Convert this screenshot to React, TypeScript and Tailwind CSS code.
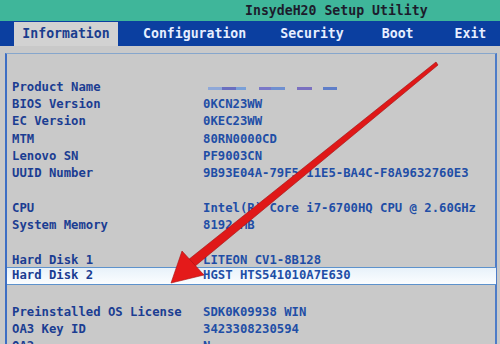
import React from "react";

const mono = { fontFamily: '"DejaVu Sans Mono", "Liberation Mono", monospace' };

type Row = { label: string; value: React.ReactNode } | null;

const Blur = () => (
  <div className="flex items-center h-full pt-[3px] gap-0">
    <div className="w-[14px] h-[3px] bg-[#8fa8d8] ml-[5px]" />
    <div className="w-[14px] h-[3px] bg-[#6a6fc0]" />
    <div className="w-[10px] h-[3px] bg-[#7aa0d8]" />
    <div className="w-[12px] h-[3px] bg-[#7a78c8] ml-[13px]" />
    <div className="w-[14px] h-[3px] bg-[#6f8fd0]" />
    <div className="w-[15px] h-[3px] bg-[#7a70c0] ml-[12px]" />
    <div className="w-[14px] h-[3px] bg-[#5f7ec8] ml-[11px]" />
  </div>
);

const rows: Row[] = [
  { label: "Product Name", value: <Blur /> },
  { label: "BIOS Version", value: "0KCN23WW" },
  { label: "EC Version", value: "0KEC23WW" },
  { label: "MTM", value: "80RN0000CD" },
  { label: "Lenovo SN", value: "PF9003CN" },
  { label: "UUID Number", value: "9B93E04A-79F5-11E5-BA4C-F8A9632760E3" },
  null,
  { label: "CPU", value: "Intel(R) Core i7-6700HQ CPU @ 2.60GHz" },
  { label: "System Memory", value: "8192 MB" },
  null,
  { label: "Hard Disk 1", value: "LITEON CV1-8B128" },
  { label: "Hard Disk 2", value: "HGST HTS541010A7E630" },
  null,
  { label: "Preinstalled OS License", value: "SDK0K09938 WIN" },
  { label: "OA3 Key ID", value: "3423308230594" },
  { label: "OA2", value: "N" },
];

export default function App() {
  return (
    <div
      className="relative w-[500px] h-[344px] overflow-hidden bg-[#c9c9c9] font-bold"
      style={mono}
    >
      <div className="h-[21px] bg-[#3fb69a] flex items-center pl-[245px] text-[13.2px] text-[#1c1c2c] leading-none pt-[1px]">
        InsydeH20 Setup Utility
      </div>
      <div className="h-[25px] bg-[#0b3fa0] flex items-end text-[13.2px] text-[#e6eeff] leading-none">
        <div className="ml-[14px] w-[104px] h-[24px] bg-[#d2d2d2] text-[#1a3d8e] flex items-center justify-center">
          Information
        </div>
        <div className="h-[24px] flex items-center ml-[25px]">Configuration</div>
        <div className="h-[24px] flex items-center ml-[34px]">Security</div>
        <div className="h-[24px] flex items-center ml-[38px]">Boot</div>
        <div className="h-[24px] flex items-center ml-[41px]">Exit</div>
      </div>
      <div className="h-[7px]" />
      <div className="ml-[5px] mr-[3px] h-[400px] border-t border-t-[#86a6cc] border-l-2 border-l-[#3d6ec4] border-r-2 border-r-[#4d7cc8] pt-[24px] text-[12.25px]">
        {rows.map((r, i) =>
          r === null ? (
            <div key={i} className="h-[17.33px]" />
          ) : i === 11 ? (
            <div
              key={i}
              className="flex items-center h-[18px] -mt-[2px] mb-[1.33px] -mr-[1px] leading-none bg-gradient-to-b from-[#e8f2fa] to-[#fbfdff] border-y border-[#5d92cc]"
            >
              <div className="w-[196px] pl-[5px] text-[#1b3d92] shrink-0">{r.label}</div>
              <div className="text-[#1f4ea6] whitespace-nowrap">{r.value}</div>
            </div>
          ) : (
            <div key={i} className="flex items-center h-[17.33px] leading-none">
              <div className="w-[196px] pl-[5px] text-[#1b3d92] shrink-0">{r.label}</div>
              <div className="text-[#1f4ea6] h-full flex items-center whitespace-nowrap">
                {r.value}
              </div>
            </div>
          )
        )}
      </div>
      <svg
        className="absolute left-0 top-0 pointer-events-none"
        width="500"
        height="344"
        viewBox="0 0 500 344"
      >
        <polygon
          points="436,62 438,65 194,267 188,260"
          fill="#e01818"
          stroke="#a01010"
          strokeWidth="0.6"
        />
        <polygon
          points="171,283 182,251 204,275"
          fill="#e41a1a"
          stroke="#a81010"
          strokeWidth="0.6"
        />
      </svg>
    </div>
  );
}
